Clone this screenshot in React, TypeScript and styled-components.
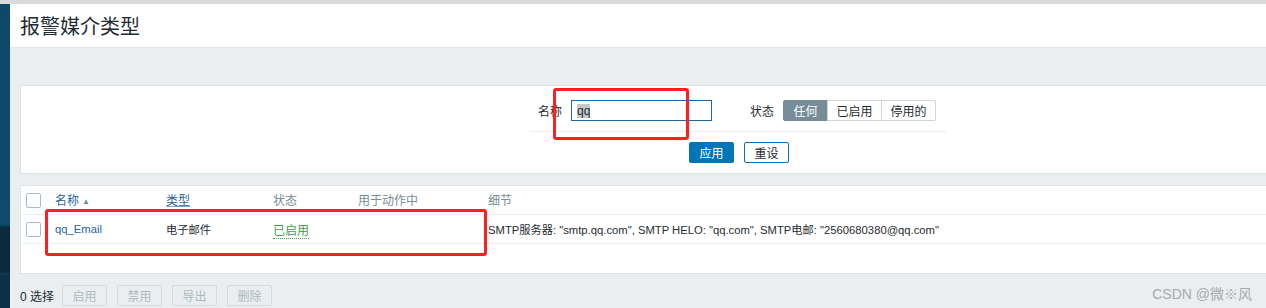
import { styled, createGlobalStyle } from "styled-components";

const GlobalStyle = createGlobalStyle`
  html, body {
    margin: 0;
    padding: 0;
    background: #ebeef0;
  }
  body {
    font-family: "Liberation Sans", Arial, "Noto Sans CJK SC", sans-serif;
    font-size: 12px;
    color: #1f2c33;
  }
`;

const columns = [
  { title: "名称", width: 111, kind: "sort" },
  { title: "类型", width: 107, kind: "link" },
  { title: "状态", width: 85, kind: "plain" },
  { title: "用于动作中", width: 130, kind: "plain" },
  { title: "细节", width: undefined, kind: "plain" },
] as const;

const footerActions = ["启用", "禁用", "导出", "删除"];

export default function App() {
  return (
    <Page>
      <GlobalStyle />
      <TopStrip />
      <Body>
        <Sidebar />
        <Main>
          <Header>
            <Title>报警媒介类型</Title>
          </Header>
          <Content>
            <FilterPanel>
              <FilterRow>
                <FieldLabel>名称</FieldLabel>
                <TextInput>
                  <Selected>qq</Selected>
                </TextInput>
                <StatusLabel>状态</StatusLabel>
                <Segmented>
                  <Segment $active>任何</Segment>
                  <Segment>已启用</Segment>
                  <Segment>停用的</Segment>
                </Segmented>
              </FilterRow>
              <FilterButtons>
                <PrimaryButton>应用</PrimaryButton>
                <OutlineButton>重设</OutlineButton>
              </FilterButtons>
            </FilterPanel>

            <TablePanel>
              <Table>
                <thead>
                  <tr>
                    <CheckCell>
                      <Checkbox />
                    </CheckCell>
                    {columns.map((c) => (
                      <HeadCell key={c.title} $kind={c.kind} style={c.width ? { width: c.width } : undefined}>
                        {c.title}
                        {c.kind === "sort" && <SortArrow>▲</SortArrow>}
                      </HeadCell>
                    ))}
                  </tr>
                </thead>
                <tbody>
                  <tr>
                    <CheckCell>
                      <Checkbox />
                    </CheckCell>
                    <Cell>
                      <NameLink>qq_Email</NameLink>
                    </Cell>
                    <Cell>电子邮件</Cell>
                    <Cell>
                      <Enabled>已启用</Enabled>
                    </Cell>
                    <Cell />
                    <DetailCell>
                      SMTP服务器: "smtp.qq.com", SMTP HELO: "qq.com", SMTP电邮: "2560680380@qq.com"
                    </DetailCell>
                  </tr>
                </tbody>
              </Table>
            </TablePanel>

            <Footer>
              <Selection>0 选择</Selection>
              {footerActions.map((a) => (
                <DisabledButton key={a}>{a}</DisabledButton>
              ))}
            </Footer>
          </Content>
        </Main>
      </Body>

      <Highlight style={{ left: 553, top: 88, width: 136, height: 52 }} />
      <Highlight style={{ left: 45, top: 209, width: 442, height: 47 }} />
      <Watermark>CSDN @微※风</Watermark>
    </Page>
  );
}

const Page = styled.div`
  position: relative;
  width: 1266px;
  height: 308px;
  overflow: hidden;
  background: #ebeef0;
`;

const TopStrip = styled.div`
  height: 4px;
  background: #dadada;
`;

const Body = styled.div`
  display: flex;
  height: 304px;
`;

const Sidebar = styled.div`
  width: 10px;
  flex-shrink: 0;
  background: linear-gradient(
    to bottom,
    #0e4769 0px,
    #0e4a6d 220px,
    #0b2a3d 224px,
    #0b2a3d 268px,
    #173a50 270px,
    #0c3048 272px,
    #0c3048 100%
  );
`;

const Main = styled.div`
  flex: 1;
  display: flex;
  flex-direction: column;
`;

const Header = styled.div`
  height: 43px;
  display: flex;
  align-items: center;
  padding-left: 10px;
  background: #fff;
  border-bottom: 1px solid #dfe4e7;
`;

const Title = styled.h1`
  margin: 0;
  font-size: 20px;
  font-weight: normal;
  color: #1f2c33;
  font-family: "Noto Sans CJK SC", sans-serif;
  line-height: 22px;
`;

const Content = styled.div`
  padding: 37px 0 0 10px;
`;

const FilterPanel = styled.div`
  background: #fff;
  border: 1px solid #dfe4e7;
  border-right: none;
  padding-top: 14px;
  box-sizing: border-box;
  height: 89px;
`;

const FilterRow = styled.div`
  display: flex;
  align-items: center;
  width: 416px;
  margin-left: 509px;
  padding-bottom: 10px;
  border-bottom: 1px solid #ebeef0;
`;

const FieldLabel = styled.span`
  width: 32px;
  text-align: right;
  margin-right: 9px;
  font-family: "Noto Sans CJK SC", sans-serif;
`;

const TextInput = styled.div`
  width: 141px;
  height: 21px;
  box-sizing: border-box;
  border: 1px solid #1f65a0;
  display: flex;
  align-items: center;
  padding-left: 5px;
`;

const Selected = styled.span`
  background: #c8c8c8;
  color: #1f2c33;
  line-height: 14px;
`;

const StatusLabel = styled.span`
  margin-left: 38px;
  margin-right: 9px;
  font-family: "Noto Sans CJK SC", sans-serif;
`;

const Segmented = styled.div`
  display: flex;
  height: 21px;
`;

const Segment = styled.div<{ $active?: boolean }>`
  width: 55px;
  box-sizing: border-box;
  display: flex;
  align-items: center;
  justify-content: center;
  font-family: "Noto Sans CJK SC", sans-serif;
  border: 1px solid ${(p) => (p.$active ? "#768d99" : "#cfd5d9")};
  margin-left: -1px;
  background: ${(p) => (p.$active ? "#768d99" : "#fff")};
  color: ${(p) => (p.$active ? "#fff" : "#1f2c33")};
  &:first-child {
    width: 45px;
    margin-left: 0;
    border-radius: 2px 0 0 2px;
  }
  &:last-child {
    border-radius: 0 2px 2px 0;
  }
`;

const FilterButtons = styled.div`
  display: flex;
  gap: 10px;
  margin-left: 668px;
  margin-top: 10px;
`;

const PrimaryButton = styled.div`
  width: 45px;
  height: 21px;
  box-sizing: border-box;
  display: flex;
  align-items: center;
  justify-content: center;
  background: #0275b8;
  color: #fff;
  border-radius: 2px;
  font-family: "Noto Sans CJK SC", sans-serif;
`;

const OutlineButton = styled(PrimaryButton)`
  background: #fff;
  color: #1f2c33;
  border: 1px solid #0275b8;
`;

const TablePanel = styled.div`
  margin-top: 11px;
  height: 89px;
  box-sizing: border-box;
  background: #fff;
  border: 1px solid #dfe4e7;
  border-right: none;
`;

const Table = styled.table`
  width: 100%;
  border-collapse: collapse;
  font-family: "Liberation Sans", Arial, "Noto Sans CJK SC", sans-serif;

  tr {
    border-bottom: 1px solid #ebeef0;
  }
`;

const CheckCell = styled.td`
  width: 29px;
  padding: 0 0 0 5px;
  height: 27px;
  vertical-align: middle;
`;

const Checkbox = styled.div`
  width: 13px;
  height: 13px;
  border: 1px solid #acbbc2;
  border-radius: 2px;
  background: #fff;
`;

const HeadCell = styled.th<{ $kind: string }>`
  text-align: left;
  font-weight: normal;
  padding: 0 0 1px;
  height: 27px;
  color: ${(p) => (p.$kind === "plain" ? "#768d99" : "#1f65a0")};
  text-decoration: ${(p) => (p.$kind === "link" ? "underline" : "none")};
  text-decoration-color: #7fa6c8;
`;

const SortArrow = styled.span`
  font-size: 8px;
  margin-left: 3px;
  vertical-align: 1px;
  color: #768d99;
`;

const Cell = styled.td`
  padding: 0;
  height: 28px;
  font-size: 11.25px;
`;

const DetailCell = styled(Cell)`
  white-space: nowrap;
`;

const NameLink = styled.span`
  color: #1f65a0;
`;

const Enabled = styled.span`
  color: #429e47;
  font-size: 12px;
  border-bottom: 1px dotted #429e47;
`;

const Footer = styled.div`
  display: flex;
  align-items: center;
  gap: 10px;
  margin-top: 11px;
`;

const Selection = styled.span`
  margin-right: -2px;
  color: #1f2c33;
`;

const DisabledButton = styled.div`
  width: 45px;
  height: 21px;
  box-sizing: border-box;
  display: flex;
  align-items: center;
  justify-content: center;
  border: 1px solid #d4dadd;
  border-radius: 2px;
  color: #acbbc2;
  background: #ebeef0;
  font-family: "Noto Sans CJK SC", sans-serif;
`;

const Highlight = styled.div`
  position: absolute;
  box-sizing: border-box;
  border: 3px solid #ff1f1f;
  border-radius: 3px;
  pointer-events: none;
`;

const Watermark = styled.div`
  position: absolute;
  right: 14px;
  bottom: 5px;
  font-size: 14px;
  color: #a9a9a9;
`;
